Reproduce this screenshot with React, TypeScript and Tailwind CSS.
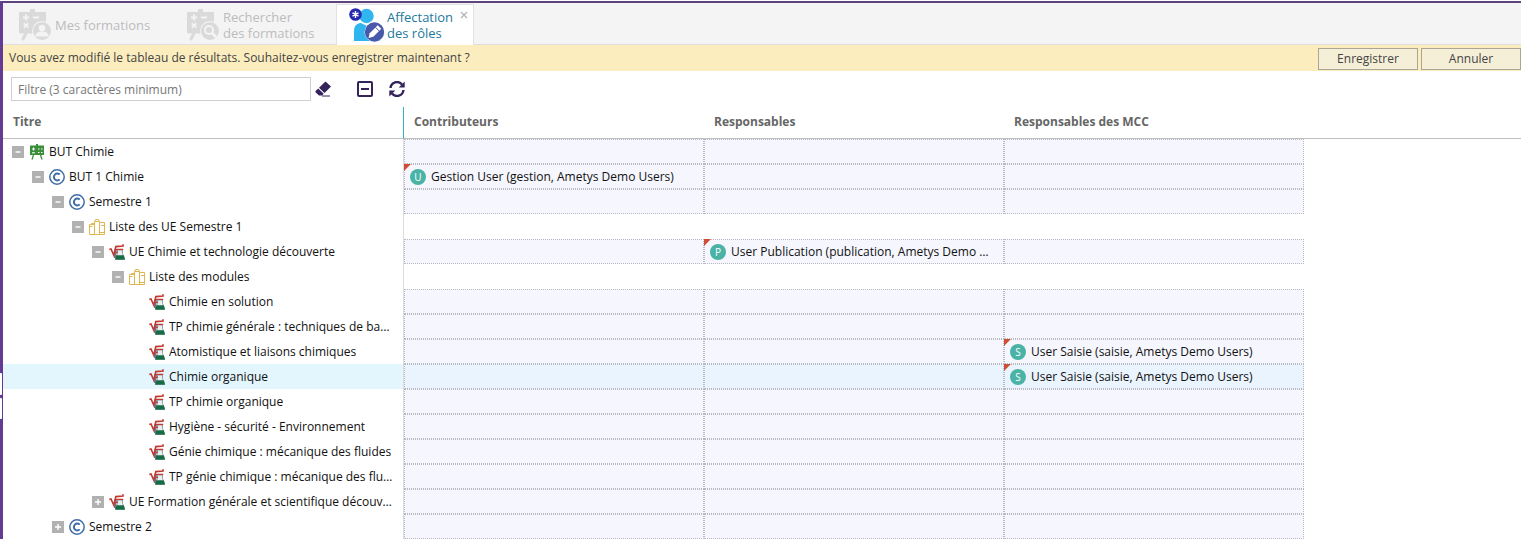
import React from "react";

type Kind = "program" | "container" | "list" | "course";
type Person = { initial: string; name: string };
type Row = {
  title: string;
  level: number;
  kind: Kind;
  toggle?: "open" | "closed";
  selected?: boolean;
  people?: (Person | null)[];
};

const saisie: Person = { initial: "S", name: "User Saisie (saisie, Ametys Demo Users)" };

const rows: Row[] = [
  { title: "BUT Chimie", level: 0, kind: "program", toggle: "open" },
  {
    title: "BUT 1 Chimie",
    level: 1,
    kind: "container",
    toggle: "open",
    people: [{ initial: "U", name: "Gestion User (gestion, Ametys Demo Users)" }, null, null],
  },
  { title: "Semestre 1", level: 2, kind: "container", toggle: "open" },
  { title: "Liste des UE Semestre 1", level: 3, kind: "list", toggle: "open" },
  {
    title: "UE Chimie et technologie découverte",
    level: 4,
    kind: "course",
    toggle: "open",
    people: [null, { initial: "P", name: "User Publication (publication, Ametys Demo Users)" }, null],
  },
  { title: "Liste des modules", level: 5, kind: "list", toggle: "open" },
  { title: "Chimie en solution", level: 6, kind: "course" },
  { title: "TP chimie générale : techniques de bases", level: 6, kind: "course" },
  { title: "Atomistique et liaisons chimiques", level: 6, kind: "course", people: [null, null, saisie] },
  { title: "Chimie organique", level: 6, kind: "course", selected: true, people: [null, null, saisie] },
  { title: "TP chimie organique", level: 6, kind: "course" },
  { title: "Hygiène - sécurité - Environnement", level: 6, kind: "course" },
  { title: "Génie chimique : mécanique des fluides", level: 6, kind: "course" },
  { title: "TP génie chimique : mécanique des fluides", level: 6, kind: "course" },
  { title: "UE Formation générale et scientifique découverte", level: 4, kind: "course", toggle: "closed" },
  { title: "Semestre 2", level: 2, kind: "container", toggle: "closed" },
];

const indents = ["pl-[9px]", "pl-[29px]", "pl-[49px]", "pl-[69px]", "pl-[89px]", "pl-[109px]", "pl-[129px]"];

function KindIcon({ kind }: { kind: Kind }) {
  if (kind === "program")
    return (
      <svg viewBox="0 0 16 16" className="size-4 shrink-0" aria-hidden="true">
        <path d="M7 0h2v2H7zM1 1.500h14v9.500H1z" fill="#3c8f3a" />
        <path d="M4.5 11 3 15.5M11.5 11 13 15.5" stroke="#3c8f3a" strokeWidth="1.3" />
        <path d="M3 5h3M4.5 3.5v3M3 8.8h3M9 5h1.500M12 5h1.5M9 8.500h1.5M12 8.500h1.5" stroke="#fff" strokeWidth="1" />
      </svg>
    );
  if (kind === "container")
    return (
      <svg viewBox="0 0 16 16" className="size-4 shrink-0" fill="none" stroke="#3f6da8" aria-hidden="true">
        <circle cx="8" cy="8" r="7.2" strokeWidth="1.5" />
        <path d="M10.7 5.6A3.4 3.4 0 1 0 10.7 10.4" strokeWidth="2" />
      </svg>
    );
  if (kind === "list")
    return (
      <svg viewBox="0 0 16 16" className="size-4 shrink-0" fill="none" stroke="#dfb650" aria-hidden="true">
        <path d="M.5 5.5h5v10h-5zM5.5 2.5 6.5.5h3l1 2v13h-5zM10.5 3.5h5v12h-5zM5.5 2.5h5M.5 7.5h3M12 6.5h3.5M10.5 13.5h5M2.5 5.5v-1h3" />
      </svg>
    );
  return (
    <svg viewBox="0 0 16 16" className="size-4 shrink-0" fill="none" aria-hidden="true">
      <path d="M5.500 5h2.500l-1 9H5z" fill="#67739a" />
      <path d="M8.500 6h5v3.500L16 15H6.500l2-5.500z" fill="#e9eeee" stroke="#7f8b91" strokeWidth=".8" />
      <path d="M.3 5.6 2 5l2.800 6.200L6.800 2.600 14 2V.2" stroke="#c2392f" strokeWidth="1.6" />
      <path d="M7 5.300h7.200M7 8.600l2-.600" stroke="#c2392f" strokeWidth="1.2" />
      <path d="M7.300 11.300h7.400l1.300 4.400H6z" fill="#176b45" />
    </svg>
  );
}

function Toggle({ state, title }: { state: "open" | "closed"; title: string }) {
  return (
    <button
      type="button"
      aria-label={title}
      aria-expanded={state === "open"}
      className="flex size-3 shrink-0 items-center justify-center bg-[#b1b1b1]"
    >
      <svg viewBox="0 0 12 12" className="size-3" stroke="#fff" strokeWidth="1.4" aria-hidden="true">
        <path d={state === "open" ? "M3.5 6h5" : "M3 6h6M6 3v6"} />
      </svg>
    </button>
  );
}

function BoardIcon({ variant }: { variant: "user" | "search" }) {
  return (
    <svg viewBox="0 0 34 34" className="size-[34px] shrink-0" fill="none" aria-hidden="true">
      <path d="M12 1h5v3h11v14a9 9 0 0 0-11 7H1V4h11z" fill="#dadada" />
      <path d="M8 25 4.5 32M2 24h15" stroke="#dadada" strokeWidth="3" />
      <path d="M5 9.500h6M8 6.500v6M5.800 15.300l4.400 4.400M10.200 15.300l-4.400 4.400M15 9.500h6" stroke="#f4f4f4" strokeWidth="1.800" />
      <circle cx="24" cy="23" r="10" fill="#f4f4f4" />
      <circle cx="24" cy="23" r="9" fill="#dadada" />
      {variant === "user" ? (
        <g fill="#f4f4f4">
          <circle cx="24" cy="20" r="3.3" />
          <path d="M17.500 28.500c0-3.500 2.500-5 6.500-5s6.500 1.500 6.500 5z" />
        </g>
      ) : (
        <g stroke="#f4f4f4">
          <circle cx="23" cy="22" r="4" strokeWidth="2" />
          <path d="m26 25 4 4" strokeWidth="2.600" />
        </g>
      )}
    </svg>
  );
}

function RolesIcon() {
  return (
    <svg viewBox="0 0 36 34" className="h-[34px] w-9 shrink-0" fill="none" aria-hidden="true">
      <circle cx="17.500" cy="8" r="7.200" fill="#31b5ee" />
      <path d="M5 33V23c0-6 4-8 7-8l6 3 6-3c4 0 7 3 7 8v10z" fill="#31b5ee" />
      <circle cx="6.500" cy="6.500" r="6.300" fill="#2a2aae" />
      <path d="M6.500 3v7M3.500 4.800l6 3.400M9.500 4.800l-6 3.400" stroke="#fff" strokeWidth="1.400" />
      <circle cx="25.500" cy="24" r="10" fill="#fff" />
      <circle cx="25.500" cy="24" r="9.700" fill="#4759a8" />
      <path d="m19.500 30 1.200-4.800 8-8 3.600 3.600-8 8z" fill="#fff" />
      <path d="m26.500 19.300 3.600 3.600" stroke="#4759a8" />
    </svg>
  );
}

function PersonCell({ person, selected }: { person: Person | null; selected?: boolean }) {
  return (
    <td
      className={`relative h-[25px] border border-dotted border-[#b9b9c1] p-0 ${selected ? "bg-[#eaf4fe]" : "bg-[#f6f7fe]"}`}
    >
      {person && (
        <>
          <span className="absolute -top-px -left-px size-[7px] bg-[#cf4c35] [clip-path:polygon(0_0,100%_0,0_100%)]" />
          <div className="flex items-center gap-[5px] pr-[9px] pl-[5px]">
            <span className="flex size-4 shrink-0 items-center justify-center rounded-full bg-[#4bb3a5] text-[10px] leading-4 text-white">
              {person.initial}
            </span>
            <span className="truncate">{person.name}</span>
          </div>
        </>
      )}
    </td>
  );
}

export default function App() {
  return (
    <div className="relative min-h-screen overflow-hidden bg-white pt-px font-['Open_Sans',sans-serif] text-[12px] leading-4 text-[#111]">
      <div className="border-t-2 border-[#5d437f]">
        <div className="min-h-screen border-l-[3px] border-[#643b94]">
          <nav className="flex h-[42px] items-end border-b border-[#dfdfdf] bg-[#f4f4f4] text-[13px]">
            <a href="#formations" className="flex h-10 w-[168px] items-center gap-[3px] pt-px pl-[15px] text-[#bcbcbc]">
              <BoardIcon variant="user" />
              <span>Mes formations</span>
            </a>
            <a href="#recherche" className="flex h-10 w-[165px] items-center gap-[3px] pt-px pl-[15px] text-[#bcbcbc]">
              <BoardIcon variant="search" />
              <span>
                Rechercher
                <br />
                des formations
              </span>
            </a>
            <div className="relative -mb-px flex h-[41px] w-[138px] items-center border border-b-0 border-[#e2e2e2] bg-white pl-3">
              <a href="#roles" aria-current="page" className="flex items-center gap-[2px] text-[#24799b]">
                <RolesIcon />
                <span>
                  Affectation
                  <br />
                  des rôles
                </span>
              </a>
              <button type="button" aria-label="Fermer" className="absolute top-[6px] right-[5px] text-[#b5b5b5]">
                <svg viewBox="0 0 8 8" className="size-2" stroke="currentColor" strokeWidth="1.3" aria-hidden="true">
                  <path d="m1 1 6 6M7 1 1 7" />
                </svg>
              </button>
            </div>
          </nav>

          <div className="flex h-[26px] items-center justify-between bg-[#fbedbe] pl-[6px] text-[#444]">
            <p>Vous avez modifié le tableau de résultats. Souhaitez-vous enregistrer maintenant ?</p>
            <div className="flex gap-[3px] pt-px">
              <button type="button" className="h-[22px] w-[100px] border border-[#aaa594] bg-[#f5efd8]">
                Enregistrer
              </button>
              <button type="button" className="h-[22px] w-[100px] border border-[#aaa594] bg-[#f5efd8]">
                Annuler
              </button>
            </div>
          </div>

          <div className="flex h-9 items-center pl-2 text-[#35245c]">
            <input
              type="text"
              aria-label="Filtre"
              placeholder="Filtre (3 caractères minimum)"
              className="h-6 w-[300px] border border-[#cfcfcf] px-[6px] text-[#444] outline-none placeholder:text-[#777]"
            />
            <button type="button" aria-label="Effacer le filtre" className="ml-1">
              <svg viewBox="0 0 16 16" className="size-4" aria-hidden="true">
                <path d="M10.500.500 16 5.500 9.500 12 4 6.800zM3.200 7.600 8.700 12.800 7 14.500H4L.500 11.200V10z" fill="currentColor" />
                <path d="M7 15h8" stroke="currentColor" />
              </svg>
            </button>
            <button type="button" aria-label="Tout replier" className="ml-[26px]">
              <svg viewBox="0 0 16 16" className="size-4" fill="none" stroke="currentColor" aria-hidden="true">
                <rect x="1" y="1" width="14" height="14" rx="1" strokeWidth="2" />
                <path d="M4 8h8" strokeWidth="2" />
              </svg>
            </button>
            <button type="button" aria-label="Actualiser" className="ml-4">
              <svg viewBox="0 0 16 16" className="size-4" fill="none" stroke="currentColor" aria-hidden="true">
                <path d="M1.500 7A6.500 6.500 0 0 1 13 3.500M14.500 9A6.500 6.500 0 0 1 3 12.500" strokeWidth="2.400" />
                <path d="M15.700.500v6h-6zM.300 15.500v-6h6z" fill="currentColor" stroke="none" />
              </svg>
            </button>
          </div>

          <table className="w-full table-fixed border-separate border-spacing-0">
            <colgroup>
              <col className="w-[401px]" />
              <col className="w-[300px]" />
              <col className="w-[300px]" />
              <col className="w-[300px]" />
              <col />
            </colgroup>
            <thead>
              <tr className="h-8 text-left text-[#666] *:border-b *:border-b-[#c0c0c0] *:px-[10px] *:pt-0 *:pb-[2px] *:font-bold">
                <th scope="col" className="border-r border-r-[#35afc4]">
                  Titre
                </th>
                <th scope="col">Contributeurs</th>
                <th scope="col">Responsables</th>
                <th scope="col">Responsables des MCC</th>
                <td />
              </tr>
            </thead>
            <tbody>
              {rows.map((row) => (
                <tr key={row.title} className="h-[25px]">
                  <td className={`border-r border-[#dcdcdc] p-0 ${row.selected ? "bg-[#e3f6fe]" : ""}`}>
                    <div className={`flex items-center pr-[10px] ${indents[row.level]}`}>
                      {row.toggle ? <Toggle state={row.toggle} title={row.title} /> : <span className="w-2 shrink-0" />}
                      <span className={`shrink-0 ${row.toggle ? "ml-[5px]" : "ml-[9px]"} mr-1`}>
                        <KindIcon kind={row.kind} />
                      </span>
                      <span className="truncate">{row.title}</span>
                    </div>
                  </td>
                  {row.kind === "list" ? (
                    <td colSpan={3} className="p-0" />
                  ) : (
                    [0, 1, 2].map((i) => (
                      <PersonCell key={i} person={row.people?.[i] ?? null} selected={row.selected} />
                    ))
                  )}
                  <td className="p-0" />
                </tr>
              ))}
            </tbody>
          </table>
        </div>
      </div>

      <button
        type="button"
        aria-label="Replier le panneau"
        className="absolute top-[373px] left-0 flex h-[46px] w-[2px] flex-col gap-[3px]"
      >
        <span className="w-full flex-1 rounded-r-[1px] bg-white" />
        <span className="w-full flex-1 rounded-r-[1px] bg-white" />
      </button>
    </div>
  );
}
